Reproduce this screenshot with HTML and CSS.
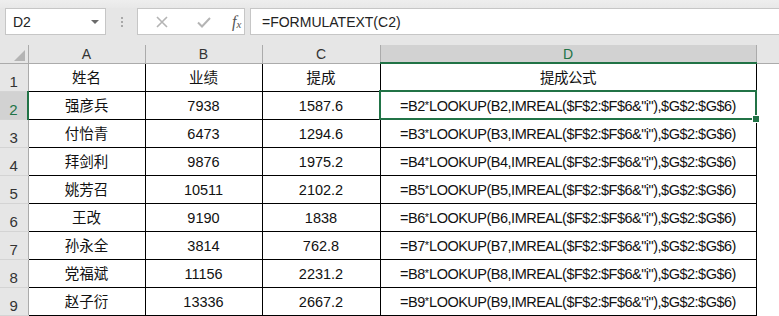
FILE: index.html
```html
<!DOCTYPE html>
<html lang="zh-CN">
<head>
  <meta charset="UTF-8" />
  <title>FORMULATEXT</title>
  <link rel="stylesheet" href="styles.css">
</head>
<body>
  <div class="toolbar">
    <div class="namebox">
      <span>D2</span>
      <span class="arrow"></span>
    </div>
    <div class="grip"><i></i><i></i><i></i></div>
    <div class="buttons">
      <svg class="btn" width="14" height="14" viewBox="0 0 14 14"><path d="M2 2 L12 12 M12 2 L2 12" stroke="#b4b4b4" stroke-width="1.6" fill="none"/></svg>
      <svg class="btn" width="16" height="14" viewBox="0 0 16 14"><path d="M2 7.5 L6 11.5 L14 3" stroke="#b4b4b4" stroke-width="2" fill="none"/></svg>
      <span class="fx">f<sub>x</sub></span>
    </div>
    <div class="formula">=FORMULATEXT(C2)</div>
  </div>

  <table class="sheet">
    <colgroup>
      <col style="width:28px">
      <col style="width:117px">
      <col style="width:117px">
      <col style="width:118px">
      <col style="width:376px">
      <col>
    </colgroup>
    <thead>
      <tr>
        <th class="corner"><span class="tri"></span></th>
        <th>A</th>
        <th>B</th>
        <th>C</th>
        <th class="active">D</th>
        <th class="rest"></th>
      </tr>
    </thead>
    <tbody id="rows"></tbody>
  </table>

  <script>
    const data = [
      ['姓名', '业绩', '提成', '提成公式'],
      ['强彦兵', '7938', '1587.6'],
      ['付怡青', '6473', '1294.6'],
      ['拜剑利', '9876', '1975.2'],
      ['姚芳召', '10511', '2102.2'],
      ['王改', '9190', '1838'],
      ['孙永全', '3814', '762.8'],
      ['党福斌', '11156', '2231.2'],
      ['赵子衍', '13336', '2667.2']
    ];
    const rowsEl = document.getElementById('rows');

    data.forEach((row, i) => {
      const n = i + 1;
      const tr = document.createElement('tr');
      const formula = n === 1 ? row[3]
        : `=B${n}<span class="star">*</span>LOOKUP(B${n},IMREAL($F$2:$F$6&"i"),$G$2:$G$6)`;
      tr.innerHTML =
        `<th class="rownum${n === 2 ? ' active' : ''}">${n}</th>` +
        `<td>${row[0]}</td><td>${row[1]}</td><td>${row[2]}</td>` +
        `<td class="formula-cell${n === 2 ? ' selected' : ''}">${formula}</td>` +
        `<td class="rest"></td>`;
      rowsEl.appendChild(tr);
    });
  </script>
</body>
</html>
```

FILE: styles.css
```css
body {
  margin: 0;
  background: #fff;
  font-family: "Liberation Sans", "Noto Sans CJK SC", sans-serif;
  overflow: hidden;
}
.toolbar {
  height: 45px;
  box-sizing: border-box;
  padding: 8px 0 10px 5px;
  background: linear-gradient(#eeeeee 0, #e8e8e8 8px, #e6e6e6 8px);
  display: flex;
  align-items: stretch;
}
.namebox {
  width: 101px;
  box-sizing: border-box;
  background: #fff;
  border: 1px solid #c6c6c6;
  display: flex;
  align-items: center;
  justify-content: space-between;
  padding: 0 6px 0 7px;
  font-size: 14px;
  color: #222;
}
.arrow {
  width: 0;
  height: 0;
  border-left: 4px solid transparent;
  border-right: 4px solid transparent;
  border-top: 4px solid #6b6b6b;
  margin-top: 1px;
}
.grip {
  width: 31px;
  display: flex;
  flex-direction: column;
  align-items: center;
  justify-content: center;
  gap: 2px;
}
.grip i {
  width: 2px;
  height: 2px;
  background: #a8a8a8;
}
.buttons {
  width: 108px;
  box-sizing: border-box;
  background: #fff;
  border: 1px solid #c6c6c6;
  display: flex;
  align-items: center;
  padding: 0 0 0 17px;
}
.btn { margin-right: 27px; }
.btn + .btn { margin-right: 20px; }
.fx {
  font-family: "Liberation Serif", serif;
  font-style: italic;
  font-size: 16px;
  color: #555;
}
.fx sub {
  font-size: 11px;
  vertical-align: -1px;
}
.formula {
  flex: 1;
  margin-left: 5px;
  background: #fff;
  border: 1px solid #c6c6c6;
  border-right: none;
  display: flex;
  align-items: center;
  padding-left: 11px;
  font-size: 14px;
  color: #222;
}
.sheet {
  border-collapse: collapse;
  table-layout: fixed;
  width: 100%;
}
.sheet th {
  background: #e6e6e6;
  font-weight: normal;
  color: #333;
  font-size: 14px;
  padding: 0;
}
.sheet thead tr { height: 18px; }
.sheet thead th {
  line-height: 16px;
  border-right: 1px solid #ababab;
  border-bottom: 1px solid #ababab;
  padding-top: 1px;
}
.sheet thead th.active {
  background: #d2d2d2;
  color: #217346;
  border-bottom: 2px solid #217346;
}
.sheet thead th.rest { border-right: none; }
.corner { position: relative; }
.tri {
  position: absolute;
  right: 3px;
  bottom: 2px;
  width: 0;
  height: 0;
  border-left: 11px solid transparent;
  border-bottom: 11px solid #b4b4b4;
}
.sheet tbody tr { height: 28px; }
.rownum {
  vertical-align: bottom;
  border-right: 1px solid #ababab;
  border-bottom: 1px solid #d4d4d4;
  font-size: 15px !important;
  line-height: 18px;
}
.rownum.active {
  background: #d2d2d2;
  color: #217346;
  border-right: 2px solid #217346;
}
.sheet td {
  border: 1px solid #000;
  text-align: center;
  vertical-align: bottom;
  font-size: 14.5px;
  line-height: 18px;
  padding: 0 0 4px;
  color: #111;
  white-space: nowrap;
  overflow: hidden;
}
.sheet td.formula-cell { letter-spacing: -0.5px; }
.sheet td.rest { border: none; border-left: 1px solid #000; }
.star {
  font-size: 11px;
  line-height: 0;
  vertical-align: 2px;
  letter-spacing: 0;
}
.sheet td.selected {
  position: relative;
  overflow: visible;
  outline: 2px solid #217346;
  outline-offset: -1px;
}
.sheet td.selected::after {
  content: "";
  position: absolute;
  right: -4px;
  bottom: -4px;
  width: 6px;
  height: 6px;
  background: #217346;
  border: 1px solid #fff;
}
```
